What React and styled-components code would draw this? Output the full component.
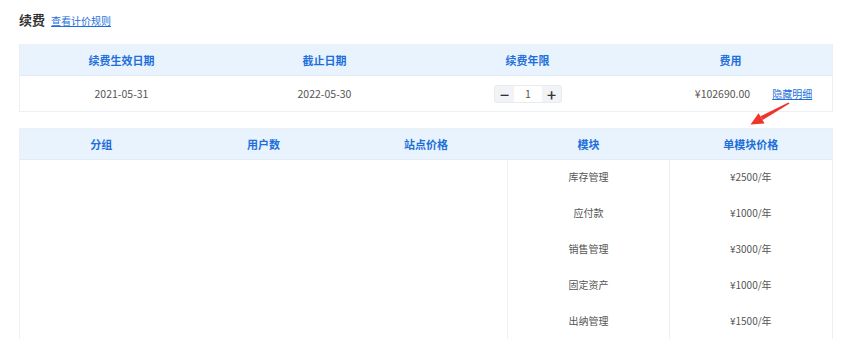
import React from "react";
import styled, { createGlobalStyle } from "styled-components";

const GlobalStyle = createGlobalStyle`
  body {
    margin: 0;
    background: #fff;
    font-family: "Microsoft YaHei", "Noto Sans CJK SC", "Noto Sans", sans-serif;
  }
`;

const modules = [
  { name: "库存管理", price: "¥2500/年" },
  { name: "应付款", price: "¥1000/年" },
  { name: "销售管理", price: "¥3000/年" },
  { name: "固定资产", price: "¥1000/年" },
  { name: "出纳管理", price: "¥1500/年" },
];

function App() {
  return (
    <Page>
      <GlobalStyle />
      <TitleBar>
        <Title>续费</Title>
        <RuleLink href="#">查看计价规则</RuleLink>
      </TitleBar>

      <Table>
        <HeadRow $cols={4}>
          <HeadCell>续费生效日期</HeadCell>
          <HeadCell>截止日期</HeadCell>
          <HeadCell>续费年限</HeadCell>
          <HeadCell>费用</HeadCell>
        </HeadRow>
        <BodyRow $cols={4}>
          <Cell>2021-05-31</Cell>
          <Cell>2022-05-30</Cell>
          <Cell>
            <Stepper>
              <StepBtn>−</StepBtn>
              <StepValue>1</StepValue>
              <StepBtn>+</StepBtn>
            </Stepper>
          </Cell>
          <Cell>
            <Amount>¥102690.00</Amount>
            <DetailLink href="#">隐藏明细</DetailLink>
          </Cell>
        </BodyRow>
        {/* red pointer towards the price column */}
        <Arrow width="44" height="26" viewBox="0 0 44 26">
          <path
            d="M40.6 1.6 L13.6 18.1 L11.4 14.3 L39.4 0.4 Z"
            fill="#f0342b"
          />
          <path d="M1.5 22.5 L9.6 11.2 L15.6 21.4 Z" fill="#f0342b" />
        </Arrow>
      </Table>

      <Table>
        <HeadRow $cols={5}>
          <HeadCell>分组</HeadCell>
          <HeadCell>用户数</HeadCell>
          <HeadCell>站点价格</HeadCell>
          <HeadCell>模块</HeadCell>
          <HeadCell>单模块价格</HeadCell>
        </HeadRow>
        <DetailGrid>
          <EmptyCell />
          <ModuleCol>
            {modules.map((m) => (
              <ModuleCell key={m.name}>{m.name}</ModuleCell>
            ))}
          </ModuleCol>
          <PriceCol>
            {modules.map((m) => (
              <ModuleCell key={m.name}>{m.price}</ModuleCell>
            ))}
          </PriceCol>
        </DetailGrid>
      </Table>
    </Page>
  );
}

export default App;

const Page = styled.div`
  padding: 10px 32px 0 19px;
  display: flex;
  flex-direction: column;
`;

const TitleBar = styled.div`
  display: flex;
  align-items: baseline;
  gap: 6px;
  height: 34px;
`;

const Title = styled.span`
  font-size: 13px;
  font-weight: bold;
  color: #333;
`;

const RuleLink = styled.a`
  font-size: 10px;
  color: #1e6fd9;
  text-decoration: underline;
`;

const Table = styled.div`
  position: relative;
  border: 1px solid #eceff3;
  margin-bottom: 16px;
`;

const HeadRow = styled.div`
  display: grid;
  grid-template-columns: repeat(${(p) => p.$cols}, 1fr);
  height: 30px;
  background: #e8f3fe;
  border-bottom: 1px solid #e3ecf6;
`;

const HeadCell = styled.div`
  display: flex;
  align-items: center;
  justify-content: center;
  font-size: 11px;
  font-weight: bold;
  color: #1e6fd9;
`;

const BodyRow = styled.div`
  display: grid;
  grid-template-columns: repeat(${(p) => p.$cols}, 1fr);
  height: 35px;
`;

const Cell = styled.div`
  display: flex;
  align-items: center;
  justify-content: center;
  font-size: 10.5px;
  color: #555;
`;

const Stepper = styled.div`
  display: flex;
  align-items: center;
  width: 68px;
  height: 18px;
  background: #f1f3f6;
  border: 1px solid #e8ebef;
  border-radius: 3px;
  box-sizing: border-box;
  margin-left: 1px;
`;

const StepBtn = styled.span`
  width: 19px;
  text-align: center;
  font-size: 16px;
  font-weight: 500;
  line-height: 16px;
  color: #333;
`;

const StepValue = styled.span`
  flex: 1;
  height: 16px;
  line-height: 16px;
  background: #fff;
  text-align: center;
  font-size: 10.5px;
  color: #555;
`;

const Amount = styled.span`
  margin-left: 46px;
`;

const DetailLink = styled.a`
  margin-left: 22px;
  font-size: 10px;
  color: #1e6fd9;
  text-decoration: underline;
`;

const Arrow = styled.svg`
  position: absolute;
  right: 39px;
  top: 57px;
`;

const DetailGrid = styled.div`
  display: grid;
  grid-template-columns: 3fr 1fr 1fr;
`;

const EmptyCell = styled.div``;

const ModuleCol = styled.div`
  border-left: 1px solid #eceff3;
  border-right: 1px solid #eceff3;
  display: flex;
  flex-direction: column;
`;

const PriceCol = styled.div`
  display: flex;
  flex-direction: column;
`;

const ModuleCell = styled.div`
  height: 36px;
  padding-bottom: 4px;
  box-sizing: border-box;
  display: flex;
  align-items: center;
  justify-content: center;
  font-size: 10px;
  color: #555;
`;
